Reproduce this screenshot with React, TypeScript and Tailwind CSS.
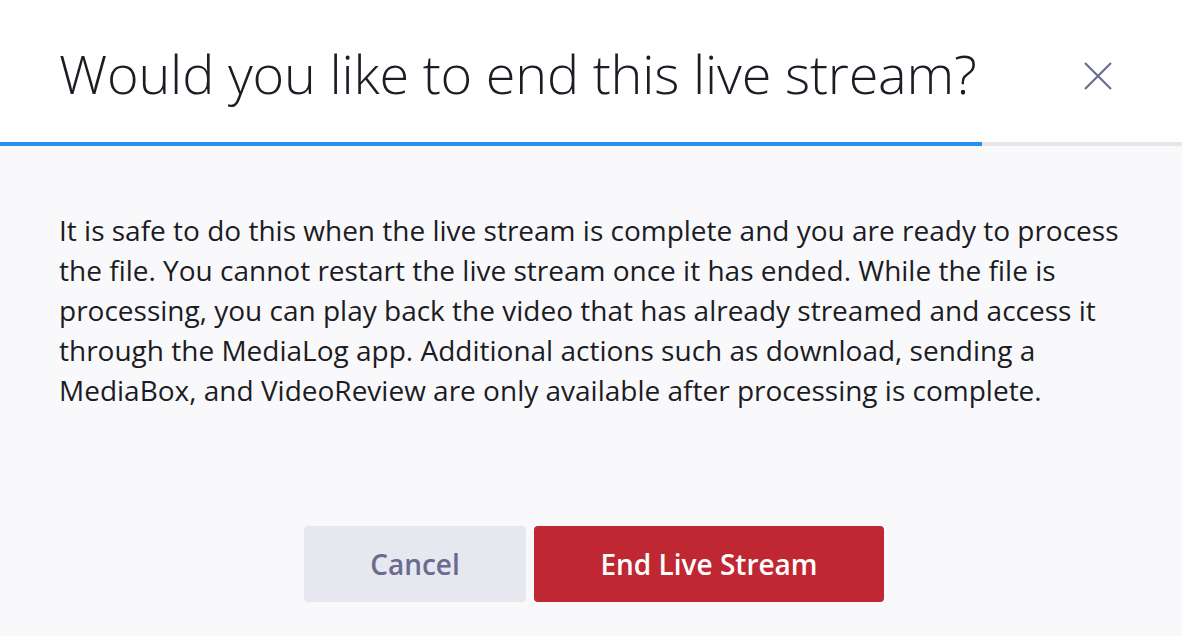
import React from "react";

export default function App() {
  return (
    <div className="w-[1182px] h-[636px] bg-[#f9f9fb] flex flex-col overflow-hidden" style={{ fontFamily: '"Open Sans", sans-serif' }}>
      <div className="bg-white h-[142px] flex items-center justify-between pl-[59px] pr-[70px] shrink-0">
        <h1 className="text-[54px] font-light text-[#1c1c24] leading-none tracking-[-0.2px] pt-[4px]">Would you like to end this live stream?</h1>
        <button className="w-[28px] h-[28px] mt-[10px] flex items-center justify-center">
          <svg width="28" height="28" viewBox="0 0 28 28" fill="none" stroke="#6b6b8f" strokeWidth="2.2">
            <path d="M1 1L27 27M27 1L1 27" />
          </svg>
        </button>
      </div>
      <div className="flex h-[4px] shrink-0">
        <div className="w-[982px] bg-[#2a8ef0]" />
        <div className="flex-1 bg-[#e6e6e6]" />
      </div>
      <div className="flex-1 flex flex-col justify-between pb-[34px]">
        <div className="pl-[59px] pr-[50px] pt-[64px]">
          <p className="text-[28px] leading-[40px] text-[#1c1c24]">
            It is safe to do this when the live stream is complete and you are ready to process the file. You cannot restart the live stream once it has ended. While the file is processing, you can play back the video that has already streamed and access it through the MediaLog app. Additional actions such as download, sending a MediaBox, and VideoReview are only available after processing is complete.
          </p>
        </div>
        <div className="flex justify-center gap-[8px] pl-[6px]">
          <button className="w-[222px] h-[76px] rounded-[4px] bg-[#e6e7ef] text-[#6b6b8f] text-[28px] font-semibold">Cancel</button>
          <button className="w-[350px] h-[76px] rounded-[4px] bg-[#bf2733] text-white text-[28px] font-semibold">End Live Stream</button>
        </div>
      </div>
    </div>
  );
}
